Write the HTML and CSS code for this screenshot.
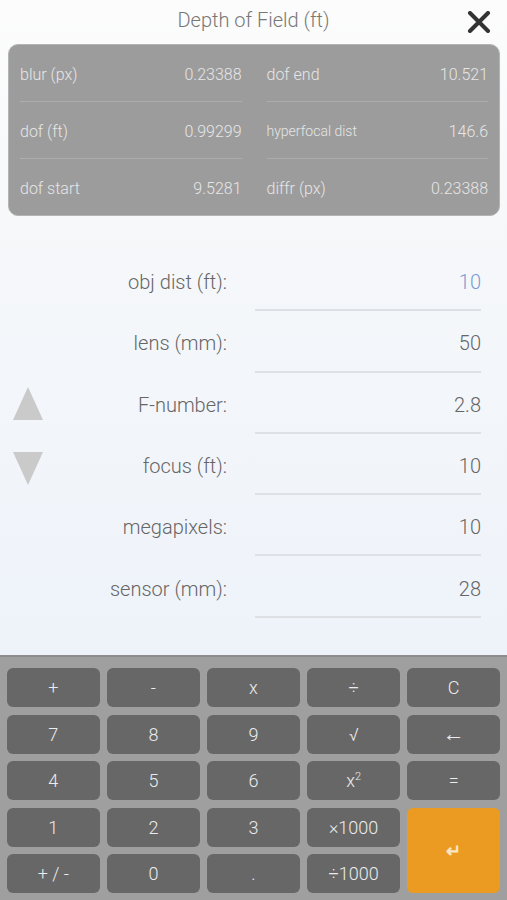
FILE: index.html
```html
<!DOCTYPE html>
<html lang="en">
  <head>
    <meta charset="UTF-8" />
    <meta name="viewport" content="width=device-width, initial-scale=1.0" />
    <title>Depth of Field</title>
    <link rel="stylesheet" href="styles.css">
  </head>
  <body>
    <div class="app">
      <header class="topbar">
        <h1>Depth of Field (ft)</h1>
        <button class="close" aria-label="Close">
          <svg width="24" height="22" viewBox="0 0 24 22">
            <path d="M3 2 L21 20 M21 2 L3 20" stroke="#333" stroke-width="4" stroke-linecap="round" />
          </svg>
        </button>
      </header>

      <section class="results">
        <div class="result"><span>blur (px)</span><span>0.23388</span></div>
        <div class="result"><span>dof end</span><span>10.521</span></div>
        <div class="result"><span>dof (ft)</span><span>0.99299</span></div>
        <div class="result small"><span>hyperfocal dist</span><span>146.6</span></div>
        <div class="result last"><span>dof start</span><span>9.5281</span></div>
        <div class="result last"><span>diffr (px)</span><span>0.23388</span></div>
      </section>

      <section class="inputs">
        <div class="arrows">
          <span class="tri up"></span>
          <span class="tri down"></span>
        </div>
        <div class="fields">
          <label>obj dist (ft):</label><div class="field active">10</div>
          <label>lens (mm):</label><div class="field">50</div>
          <label>F-number:</label><div class="field">2.8</div>
          <label>focus (ft):</label><div class="field">10</div>
          <label>megapixels:</label><div class="field">10</div>
          <label>sensor (mm):</label><div class="field">28</div>
        </div>
      </section>

      <section class="keypad">
        <button>+</button>
        <button>-</button>
        <button>x</button>
        <button>÷</button>
        <button>C</button>
        <button>7</button>
        <button>8</button>
        <button>9</button>
        <button>√</button>
        <button class="back">&#x2190;</button>
        <button>4</button>
        <button>5</button>
        <button>6</button>
        <button>x<sup>2</sup></button>
        <button>=</button>
        <button>1</button>
        <button>2</button>
        <button>3</button>
        <button>×1000</button>
        <button class="enter">&#x21B5;</button>
        <button>+ / -</button>
        <button>0</button>
        <button>.</button>
        <button>÷1000</button>
      </section>
    </div>
  </body>
</html>
```

FILE: styles.css
```css
body {
  margin: 0;
  font-family: Roboto, "Liberation Sans", sans-serif;
  font-weight: 300;
  background: #f4f6f9;
}

.app {
  width: 507px;
  height: 900px;
  display: flex;
  flex-direction: column;
  background: linear-gradient(#fcfcfc 0px, #f6f8fa 220px, #eef3fa 655px);
}

.topbar {
  height: 44px;
  position: relative;
  display: flex;
  justify-content: center;
  align-items: center;
}

.topbar h1 {
  margin: 0;
  font-size: 20px;
  font-weight: 300;
  color: #777;
  margin-top: -4px;
}

.close {
  position: absolute;
  right: 16px;
  top: 11px;
  border: none;
  background: none;
  padding: 0;
  width: 24px;
  height: 22px;
}

.results {
  margin: 0 7px 0 8px;
  height: 172px;
  box-sizing: border-box;
  background: #9c9c9c;
  border: 1px solid #b4b4b4;
  border-radius: 10px;
  display: grid;
  grid-template-columns: 1fr 1fr;
  column-gap: 25px;
  padding: 0 11px;
}

.result {
  display: flex;
  justify-content: space-between;
  align-items: center;
  font-size: 16px;
  color: #e6e6e6;
  border-bottom: 1px solid #adadad;
  padding-top: 2px;
}

.result.small span:first-child {
  font-size: 14px;
}

.result.last {
  border-bottom: none;
}

.inputs {
  display: flex;
  margin-top: 34px;
}

.arrows {
  width: 60px;
  display: flex;
  flex-direction: column;
  justify-content: center;
  gap: 32px;
  padding-top: 4px;
}

.tri {
  width: 0;
  height: 0;
  margin-left: 13px;
  border-left: 15px solid transparent;
  border-right: 15px solid transparent;
}

.tri.up {
  border-bottom: 33px solid #cacaca;
}

.tri.down {
  border-top: 33px solid #cacaca;
}

.fields {
  flex: 1;
  display: grid;
  grid-template-columns: 1fr 226px;
  grid-auto-rows: 61.3px;
  column-gap: 28px;
  padding-right: 26px;
}

.fields label {
  display: flex;
  align-items: center;
  justify-content: flex-end;
  font-size: 20px;
  color: #666;
  padding-top: 3px;
}

.field {
  display: flex;
  align-items: center;
  justify-content: flex-end;
  font-size: 20px;
  color: #666;
  border-bottom: 2px solid #dde0e5;
  box-sizing: border-box;
  padding-top: 5px;
}

.field.active {
  color: #789cd2;
}

.keypad {
  margin-top: auto;
  height: 245px;
  box-sizing: border-box;
  border-top: 2px solid #8c8c8c;
  background: #9f9f9f;
  padding: 11px 7px 7px;
  display: grid;
  grid-template-columns: repeat(5, 1fr);
  grid-template-rows: repeat(5, 39px);
  gap: 7.6px 7.5px;
}

.keypad button {
  border: none;
  border-radius: 6px;
  background: #676767;
  color: #ececec;
  font-family: Roboto, "Liberation Sans", sans-serif;
  font-weight: 300;
  font-size: 18px;
  padding: 0;
}

.keypad sup {
  font-size: 11px;
}

.keypad .back {
  font-size: 22px;
  font-weight: 700;
}

.keypad .enter {
  grid-column: 5;
  grid-row: 4 / span 2;
  background: #eb9b22;
  color: #fbe6c4;
  font-size: 18px;
  font-weight: 700;
}
```
